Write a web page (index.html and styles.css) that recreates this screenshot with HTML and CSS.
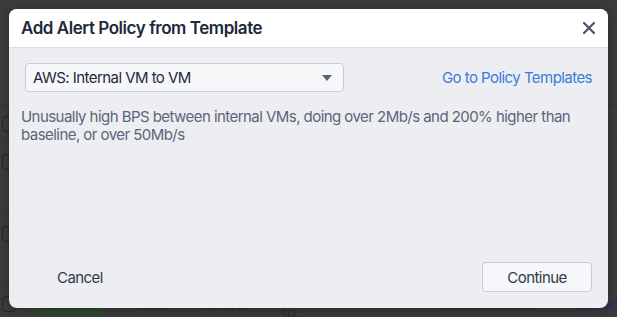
FILE: index.html
```html
<!DOCTYPE html>
<html lang="en">
<head>
    <meta charset="UTF-8">
    <meta name="viewport" content="width=device-width, initial-scale=1.0">
    <title>Add Alert Policy from Template</title>
    <link rel="stylesheet" href="styles.css">
</head>
<body>

    <div class="backdrop">
        <div class="page-rows">
            <div class="row"><span class="check"></span></div>
            <div class="row"><span class="check"></span></div>
            <div class="row r3"><span class="check"></span></div>
            <div class="row r4">
                <span class="check"></span>
                <span class="tag">Enabled</span>
                <span class="cell">Alive</span>
                <span class="cell">2/10/3</span>
                <span class="cell">Global interface sp...</span>
                <span class="cell">/interfaces/co...</span>
                <span class="cell link">Operati</span>
            </div>
        </div>
    </div>

    <div class="modal">
        <div class="modal-header">
            <h1>Add Alert Policy from Template</h1>
            <button class="close" aria-label="Close">
                <svg width="14" height="14" viewBox="0 0 14 14">
                    <path d="M2 2 L12 12 M12 2 L2 12" stroke="#4a5263" stroke-width="2.2" stroke-linecap="round"/>
                </svg>
            </button>
        </div>
        <div class="modal-body">
            <div class="top-line">
                <div class="select">
                    <span>AWS: Internal VM to VM</span>
                    <svg width="12" height="8" viewBox="0 0 12 8"><path d="M1 1 L11 1 L6 7 Z" fill="#5b6270"/></svg>
                </div>
                <a class="templates-link" href="#">Go to Policy Templates</a>
            </div>
            <p class="desc">Unusually high BPS between internal VMs, doing over 2Mb/s and 200% higher than baseline, or over 50Mb/s</p>
        </div>
        <div class="modal-footer">
            <button class="btn-plain">Cancel</button>
            <button class="btn-default">Continue</button>
        </div>
    </div>

</body>
</html>
```

FILE: styles.css
```css
body {
    margin: 0;
    width: 617px;
    height: 317px;
    overflow: hidden;
    background: #3b3b3c;
    font-family: Inter, "Noto Sans", sans-serif;
    letter-spacing: -0.55px;
    position: relative;
}
.backdrop {
    height: 317px;
}
.page-rows {
    padding-top: 104px;
}
.row {
    height: 38px;
    box-sizing: border-box;
    border-top: 1px solid #353535;
    display: flex;
    align-items: center;
    gap: 36px;
    padding-left: 2px;
    color: #2b2b2b;
    font-size: 14px;
}
.row.r3 {
    margin-top: 34px;
}
.row.r4 {
    margin-top: 32px;
}
.check {
    width: 12px;
    height: 14px;
    border: 1px solid #262626;
    border-radius: 4px;
}
.tag {
    margin-left: -17px;
    background: #2f4a2e;
    color: #2a3a28;
    padding: 2px 10px;
}
.cell.link {
    color: #223457;
}
.modal {
    position: absolute;
    left: 9px;
    top: 9px;
    width: 599px;
    height: 299px;
    background: #edeef2;
    border-radius: 8px;
    overflow: hidden;
    display: flex;
    flex-direction: column;
    box-shadow: 0 2px 8px rgba(0, 0, 0, 0.3);
}
.modal-header {
    background: #fff;
    height: 38px;
    border-bottom: 1px solid #dcdee3;
    display: flex;
    align-items: center;
    justify-content: space-between;
    padding: 0 12px 0 12px;
}
h1 {
    margin: 0;
    font-size: 17px;
    font-weight: 600;
    letter-spacing: -0.45px;
    color: #1e293b;
}
.close {
    background: none;
    border: none;
    padding: 0;
    width: 14px;
    height: 14px;
    cursor: pointer;
    display: flex;
}
.modal-body {
    flex: 1;
    padding: 15px 16px 0 12px;
}
.top-line {
    display: flex;
    align-items: center;
    justify-content: space-between;
}
.select {
    margin-left: 4px;
    width: 319px;
    height: 29px;
    box-sizing: border-box;
    border: 1px solid #c8ccd3;
    border-radius: 4px;
    background: #f6f7f9;
    display: flex;
    align-items: center;
    justify-content: space-between;
    padding: 0 10px 0 7px;
    font-size: 15px;
    color: #1e293b;
}
.templates-link {
    color: #3b7ad9;
    text-decoration: none;
    font-size: 15px;
}
.desc {
    margin: 16px 0 0 0;
    font-size: 15px;
    line-height: 18px;
    color: #5b6577;
}
.modal-footer {
    display: flex;
    justify-content: space-between;
    align-items: center;
    padding: 0 16px 16px 48px;
}
button {
    font-family: inherit;
    font-size: 15px;
    letter-spacing: inherit;
    cursor: pointer;
}
.btn-plain {
    background: none;
    border: none;
    color: #2f3a4c;
    padding: 0;
}
.btn-default {
    width: 110px;
    height: 30px;
    background: #f6f7f9;
    border: 1px solid #c8ccd3;
    border-radius: 4px;
    color: #2f3a4c;
}
```
